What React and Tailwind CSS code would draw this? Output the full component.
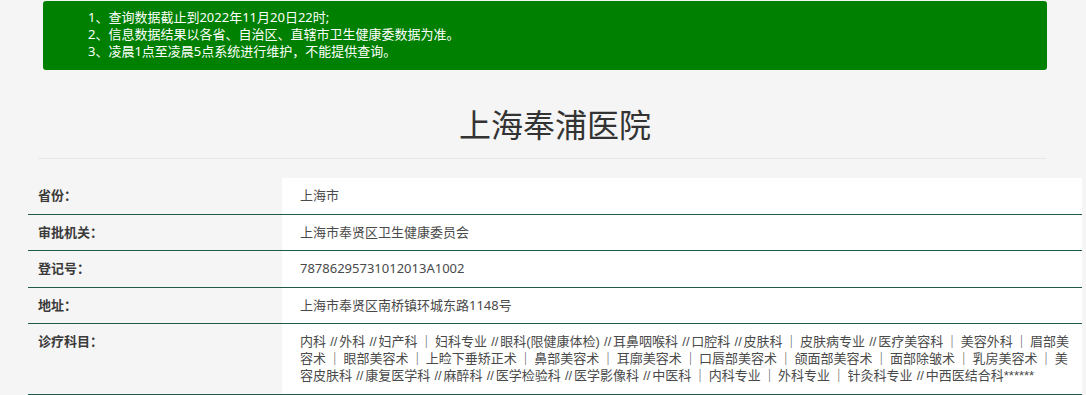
import React from 'react';

const notices = [
    '1、查询数据截止到2022年11月20日22时;',
    '2、信息数据结果以各省、自治区、直辖市卫生健康委数据为准。',
    '3、凌晨1点至凌晨5点系统进行维护，不能提供查询。',
];

const rows = [
    { label: '省份：', value: '上海市' },
    { label: '审批机关：', value: '上海市奉贤区卫生健康委员会' },
    { label: '登记号：', value: '78786295731012013A1002' },
    { label: '地址：', value: '上海市奉贤区南桥镇环城东路1148号' },
    {
        label: '诊疗科目：',
        long: true,
        value: '内科 //外科 //妇产科 ｜ 妇科专业 //眼科(限健康体检) //耳鼻咽喉科 //口腔科 //皮肤科 ｜ 皮肤病专业 //医疗美容科 ｜ 美容外科 ｜ 眉部美容术 ｜ 眼部美容术 ｜ 上睑下垂矫正术 ｜ 鼻部美容术 ｜ 耳廓美容术 ｜ 口唇部美容术 ｜ 颌面部美容术 ｜ 面部除皱术 ｜ 乳房美容术 ｜ 美容皮肤科 //康复医学科 //麻醉科 //医学检验科 //医学影像科 //中医科 ｜ 内科专业 ｜ 外科专业 ｜ 针灸科专业 //中西医结合科******',
    },
];

// slashes in the source font sit a little wider than Liberation's
const Scope = ({ text }) =>
    text.split('//').map((part, i) => (
        <React.Fragment key={i}>
            {i > 0 && <span className="ml-[2px] mr-[1.8px]">//</span>}
            {part}
        </React.Fragment>
    ));

const App = () => {
    return (
        <div className="min-h-screen bg-[#f5f5f5] text-[13px] leading-[17px] text-[#333] font-['Noto_Sans','Noto_Sans_CJK_SC',sans-serif]">
            {/* notice */}
            <div className="pt-px">
                <div className="ml-[43px] w-[1004px] h-[69px] rounded-[3px] bg-[#008000] text-white pl-[45px] pt-[8px]">
                    {notices.map((n) => (
                        <div key={n}>{n}</div>
                    ))}
                </div>
            </div>

            <div className="ml-[28px] w-[1054px]">
                {/* title */}
                <h1 className="mt-[37px] text-center text-[32px] leading-[36px] text-[#333]">上海奉浦医院</h1>
                <div className="mt-[15px] ml-[10px] w-[1008px] border-t border-[#e6e6e6]"></div>

                {/* detail table */}
                <div className="mt-[19px]">
                    {rows.map((r) => (
                        <div key={r.label} className="flex border-b border-[#1f5a4b]">
                            <div className="w-[254px] shrink-0 pl-[10px] pt-[9px] pb-[9.5px] font-bold text-[#3a3a3a]">{r.label}</div>
                            {r.long ? (
                                <div className="flex-1 bg-white pl-[18px] pr-[7px] pt-[9px] pb-[9.5px] text-[#4a4a4a] break-all font-['Liberation_Sans','Noto_Sans_CJK_SC',sans-serif] [word-spacing:-1.4px]">
                                    <Scope text={r.value} />
                                </div>
                            ) : (
                                <div className="flex-1 bg-white pl-[18px] pr-[7px] pt-[9px] pb-[9.5px] text-[#4a4a4a]">{r.value}</div>
                            )}
                        </div>
                    ))}
                </div>
            </div>
        </div>
    );
};

export default App;
